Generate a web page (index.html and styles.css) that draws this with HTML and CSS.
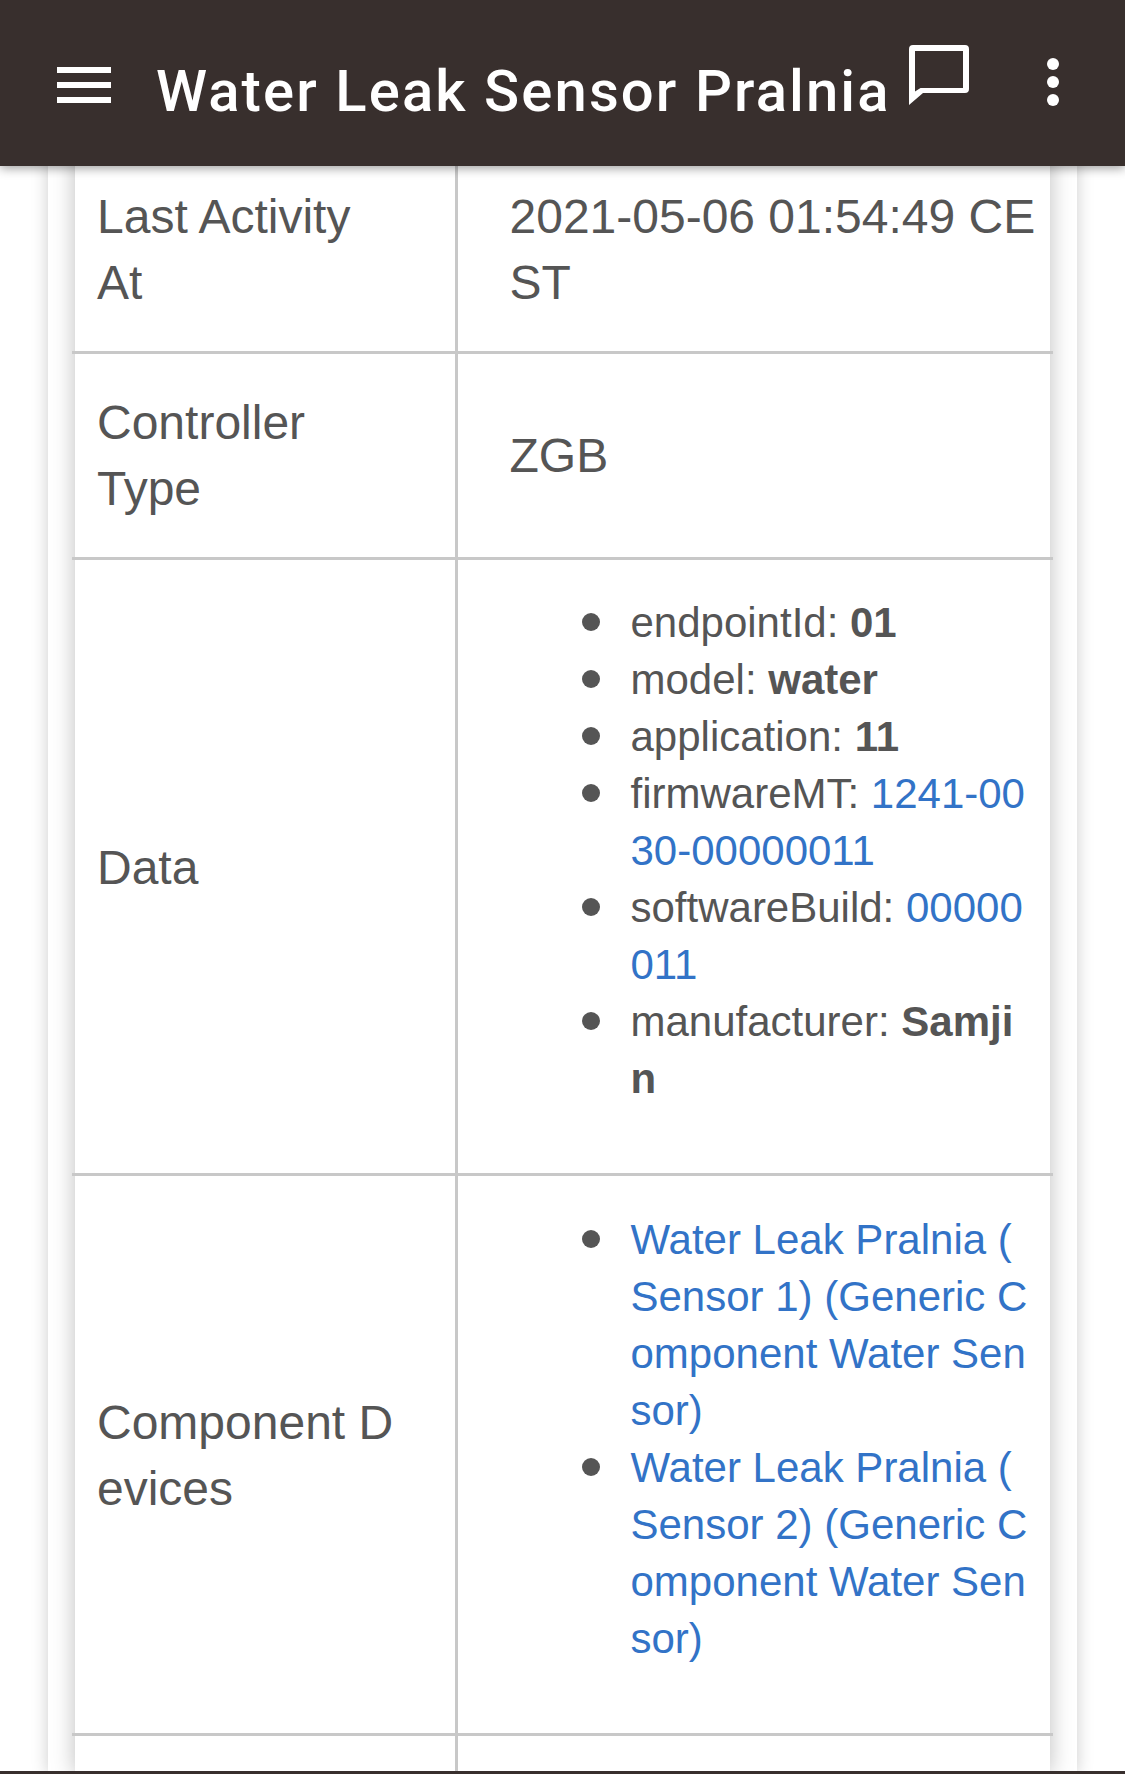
FILE: index.html
```html
<!DOCTYPE html>
<html lang="en">
<head>
<meta charset="utf-8">
<title>Water Leak Sensor Pralnia</title>
<link rel="stylesheet" href="styles.css">
</head>
<body>
<header class="appbar">
  <svg class="menu" viewBox="0 0 54 36" aria-hidden="true"><path d="M0 3h54M0 18h54M0 33h54" /></svg>
  <h1 class="title">Water Leak Sensor Pralnia</h1>
  <svg class="chat" viewBox="0 0 60 60" aria-hidden="true"><path d="M4 0h52a4 4 0 0 1 4 4v40a4 4 0 0 1-4 4H14L0 60V4a4 4 0 0 1 4-4zM6 6v40.500L11.500 43H54V6z" fill-rule="evenodd"/></svg>
  <svg class="more" viewBox="0 0 12 48" aria-hidden="true"><circle cx="6" cy="6" r="6"/><circle cx="6" cy="24" r="6"/><circle cx="6" cy="42" r="6"/></svg>
</header>
<main class="card">
  <div class="sheet">
    <table class="details">
      <colgroup><col class="col-label"><col class="col-value"></colgroup>
      <tr class="row-activity">
        <td>Last Activity<br>At</td>
        <td class="value">2021-05-06 01:54:49 CEST</td>
      </tr>
      <tr class="row-type">
        <td>Controller<br>Type</td>
        <td class="value">ZGB</td>
      </tr>
      <tr class="row-data">
        <td>Data</td>
        <td class="value">
          <ul class="list">
            <li>endpointId: <b>01</b></li>
            <li>model: <b>water</b></li>
            <li>application: <b>11</b></li>
            <li>firmwareMT: <a href="#">1241-0030-00000011</a></li>
            <li>softwareBuild: <a href="#">00000011</a></li>
            <li>manufacturer: <b>Samjin</b></li>
          </ul>
        </td>
      </tr>
      <tr class="row-devices">
        <td>Component Devices</td>
        <td class="value">
          <ul class="list">
            <li><a href="#">Water Leak Pralnia (<wbr>Sensor 1) (<wbr>Generic Component Water Sensor)</a></li>
            <li><a href="#">Water Leak Pralnia (<wbr>Sensor 2) (<wbr>Generic Component Water Sensor)</a></li>
          </ul>
        </td>
      </tr>
      <tr class="row-next"><td></td><td class="value"></td></tr>
    </table>
  </div>
</main>
<div class="bottom-edge"></div>
</body>
</html>
```
FILE: styles.css
```css
* { box-sizing: border-box; }
html, body { margin: 0; height: 1774px; overflow: hidden; background: #fff; }
body { font-family: "Liberation Sans", Arial, sans-serif; color: #555; }

.appbar {
  position: fixed; top: 0; left: 0; right: 0; height: 166px;
  background: #382f2d; color: #fff;
  box-shadow: 0 2px 10px rgba(0,0,0,.4);
  z-index: 2;
}
.appbar svg { position: absolute; fill: #fff; }
.menu { left: 57px; top: 67px; width: 54px; height: 36px; }
.menu path { stroke: #fff; stroke-width: 6; fill: none; }
.chat { left: 909px; top: 45px; width: 60px; height: 60px; }
.more { left: 1047px; top: 58px; width: 12px; height: 48px; }
.title {
  position: absolute; left: 156px; top: 57px; margin: 0;
  font: 500 58px/68px Roboto, sans-serif; letter-spacing: 2.1px; white-space: nowrap;
}

.card {
  margin: 0 48px;
  height: 1774px;
  padding: 0 27px 0 27px;
  background: #fff;
  box-shadow: 0 0 16px rgba(0,0,0,.2);
}
.sheet {
  height: 1774px;
  padding-top: 145px;
  background: #fff;
  box-shadow: 0 0 22px rgba(0,0,0,.26);
}
.details {
  width: 981px; margin: 0 -3px; table-layout: fixed; border-collapse: collapse;
  font-size: 48px; line-height: 66px;
}
.col-label { width: 384px; }
.details td {
  border: 3px solid #c8c8c8;
  padding: 0 57px 0 25px;
  vertical-align: middle; word-break: break-all;
}
.details tr td:first-child { border-left: 0; }
.details tr td:last-child { border-right: 0; }
.details td.value { padding: 0 14px 0 52px; }
.row-activity { height: 206px; }
.row-type { height: 206px; }
.row-data { height: 616px; }
.row-devices { height: 560px; }
.row-next { height: 60px; }
.details .row-data td, .details .row-devices td { padding-top: 2px; }

.list {
  margin: 0 5px 34px 0; padding: 0 0 0 121px; list-style: none;
  font-size: 42px; line-height: 57px;
}
.list li { position: relative; }
.list li::before {
  content: ""; position: absolute; left: -49px; top: 19px;
  width: 18px; height: 18px; border-radius: 50%; background: #555;
}
.list a { color: #3273c7; text-decoration: none; }
.list b { font-weight: 700; }

.bottom-edge {
  position: fixed; left: 0; right: 0; bottom: 0; height: 3px; background: #382f2d; z-index: 3;
}
```
